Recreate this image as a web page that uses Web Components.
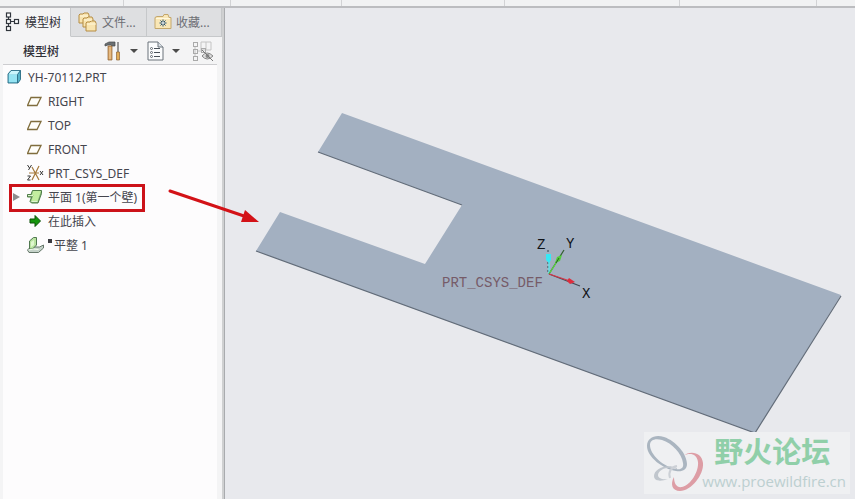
<!DOCTYPE html>
<html lang="zh-CN">
<head>
<meta charset="utf-8">
<title>YH-70112.PRT</title>
<style>
  html, body {
    margin: 0;
    height: 100%;
  }
  body {
    font-family: "Noto Sans", "Noto Sans CJK SC", sans-serif;
    font-size: 12px;
    color: #45454d;
    background: #e8e9ed;
    overflow: hidden;
  }
</style>
</head>
<body>
<cad-app>
  <tree-panel slot="panel" heading="模型树">
    <panel-tab slot="tabs" icon="tree" label="模型树" selected></panel-tab>
    <panel-tab slot="tabs" icon="folders" label="文件..."></panel-tab>
    <panel-tab slot="tabs" icon="favorite" label="收藏..."></panel-tab>
    <tree-item icon="part" root>YH-70112.PRT</tree-item>
    <tree-item icon="datum">RIGHT</tree-item>
    <tree-item icon="datum">TOP</tree-item>
    <tree-item icon="datum">FRONT</tree-item>
    <tree-item icon="csys">PRT_CSYS_DEF</tree-item>
    <tree-item icon="wall" expandable marked>平面 1(第一个壁)</tree-item>
    <tree-item icon="insert">在此插入</tree-item>
    <tree-item icon="flat" pending>平整 1</tree-item>
  </tree-panel>
  <model-view slot="view">
    <forum-mark>野火论坛</forum-mark>
  </model-view>
  <callout-arrow slot="overlay"></callout-arrow>
</cad-app>

<script>
(function () {
  const ICONS = {
    tree: [16, 20, `<g fill="#fff" stroke="#30353c" stroke-width="1.2"><path d="M3.500 5v10M5 9.500h5" fill="none"/><rect x="1.500" y="1" width="4" height="4"/><rect x="1.500" y="7.500" width="4" height="4"/><rect x="1.500" y="14.500" width="4" height="4"/><rect x="9.500" y="7.500" width="4" height="4"/></g>`],
    folders: [20, 20, `<g fill="#f8e4b0" stroke="#b58c43"><path d="M1 11V3l1-1h3l1-1h4l1 2v8z"/><path d="M5 15V7l1-1h3l1-1h4l1 2v8z"/><path d="M8 19v-8l1-1h3l1-1h4l1 2v8z"/></g><path d="M9 12h9M6 8h8M2 4h8" stroke="#fff7da"/>`],
    favorite: [18, 16, `<path d="M1 14.500V3.500l2-1h6l1-2h4l1 3h2v11z" fill="#f9e7b7" stroke="#c4a76c"/><path d="M2 4.500h14" stroke="#fff8df"/><path d="M9 5.500v7M5.500 9h7M6.500 6.500l5 5M11.500 6.500l-5 5" stroke="#234f75"/><circle cx="9" cy="9" r="1" fill="#fff"/>`],
    tools: [18, 20, `<path d="M1 5V3l4-2h6v4H8L7 4H4z" fill="#6b7073" stroke="#45494b" stroke-width=".7"/><path d="M4 5h4v14H4z" fill="#d9a568" stroke="#8d6135" stroke-width=".7"/><path d="M6 6v12" stroke="#f2cf9c"/><path d="M14 1v10" stroke="#777" stroke-width="1.500"/><path d="M12.500 11h3v8h-3z" fill="#e2ad57" stroke="#8d6135" stroke-width=".7"/>`],
    list: [17, 20, `<path d="M1 1h10l5 5v13H1z" fill="#fbfcfd" stroke="#6b737b"/><path d="M11 1v5h5" fill="#dce2e8" stroke="#6b737b"/><path d="M7 7.500h6M7 11.500h6M7 15.500h6" stroke="#4a5159"/><g fill="#fff" stroke="#4a5159" stroke-width=".8"><circle cx="4.500" cy="7.500" r="1"/><circle cx="4.500" cy="11.500" r="1"/><circle cx="4.500" cy="15.500" r="1"/></g>`],
    hidden: [22, 20, `<g fill="none" stroke="#aaa"><path d="M3 5v10M5 10h4M9 1v8h10V1zM14 1v8" stroke="#c4c4c4"/><rect x="1.500" y="1.500" width="4" height="4"/><rect x="1.500" y="8.500" width="4" height="4"/><rect x="1.500" y="15.500" width="4" height="4"/><rect x="9.500" y="7.500" width="4" height="4"/></g><path d="M10 15q5-6 11 0-6 6-11 0z" fill="#ddd" stroke="#868686"/><circle cx="15.500" cy="15" r="2" fill="#888"/><path d="M10 9l11 11" stroke="#777"/>`],
    part: [16, 16, `<path d="M1 5l3-3.500h9.500v9L11 14H1z" fill="#54b3ca"/><path d="M1.500 5.500h9V13l-1 .5h-8z" fill="#96e4f3"/><path d="M1.500 5.500l3-4H13l-2.500 4z" fill="#c9f5fc"/><path d="M1 5l3-3.500h9.500v9L11 14H1zM10.500 5.500l3-4M10.500 5.500V14" fill="none" stroke="#286b83" stroke-width=".9"/>`],
    datum: [16, 16, `<path d="M4 4.500h10l-4 8H.500z" fill="#fffefa" stroke="#806d3d" stroke-width="1.300"/>`],
    csys: [17, 18, `<path d="M2 9h10M5 3l7 13M12 2L5 16" fill="none" stroke="#a5793c" stroke-width="1.200"/><path d="M0.500 1l2 3M4.500 1l-3 5M0.500 12h3l-3 4h3M13 7l3 4M16 7l-3 4" fill="none" stroke="#383838"/>`],
    wall: [16, 16, `<path d="M5.500 1.500h9v3l-3.500 9.500H4.500L3 12.500l1.500-4.500H.500V5.500h3.500z" fill="#7fb070" stroke="#4f7d49"/><path d="M6 2h8l-3.500 10.500H4L6.500 6H5z" fill="#c3ee9f"/><path d="M1 6.500h5M4.500 12.500h6" stroke="#e0f5d2"/>`],
    insert: [16, 16, `<path d="M3 6h5V2.500L13.500 8 8 13.500V10H3z" fill="#16950d" stroke="#0d5109"/>`],
    flat: [17, 18, `<path d="M.5 14l3-3h9l4-2v3l-5 4.500H2z" fill="#c5d2c9" stroke="#65776a"/><path d="M2.500 5l4-3.500h3V9l-4 4h-3z" fill="#b9e3a0" stroke="#517850"/><path d="M1.500 14l5-1 5 .5" fill="none" stroke="#f6fff0"/><path d="M4 6l3-2v5l-3 2z" fill="#dff7ce"/>`]
  };

  function icon(name) {
    const [w, h, body] = ICONS[name];
    return `<svg width="${w}" height="${h}" viewBox="0 0 ${w} ${h}" aria-hidden="true">${body}</svg>`;
  }

  function define(name, render) {
    customElements.define(name, class extends HTMLElement {
      connectedCallback() {
        if (this.shadowRoot) return;
        const template = document.createElement("template");
        template.innerHTML = render(this);
        this.attachShadow({ mode: "open" }).appendChild(template.content.cloneNode(true));
      }
    });
  }

  define("cad-app", () => `
    <style>
      :host {
        display: flex;
        flex-direction: column;
        position: relative;
        height: 100vh;
      }
      .ribbon {
        display: grid;
        grid-template-columns: 123fr 107fr 111fr 163fr 175fr 137fr 39fr;
        height: 6px;
        background: #f1f2f3;
        border-bottom: 2px solid #bcbdc0;
      }
      .ribbon i + i {
        border-left: 1px solid #d2d3d5;
      }
      .main {
        flex: 1;
        display: flex;
        min-height: 0;
      }
    </style>
    <div class="ribbon"><i></i><i></i><i></i><i></i><i></i><i></i><i></i></div>
    <div class="main">
      <slot name="panel"></slot>
      <slot name="view"></slot>
    </div>
    <slot name="overlay"></slot>
  `);

  define("tree-panel", (el) => `
    <style>
      :host {
        display: flex;
        flex-direction: column;
        flex: none;
        width: 222px;
        background: #f4f4f5;
        border-right: 2px solid #cfd0d1;
        box-shadow: 1px 0 #a9abae;
        margin-right: 1px;
      }
      .tabs {
        display: grid;
        grid-template-columns: 71px 76px 1fr;
        height: 29px;
      }
      header {
        display: flex;
        align-items: center;
        height: 27px;
        margin: 0 5px 0 3px;
        padding-left: 20px;
        border-bottom: 1px solid #cdcdd0;
      }
      h2 {
        flex: 1;
        margin: 0;
        font-size: 12px;
        font-weight: 500;
        color: #303038;
      }
      button {
        display: flex;
        align-items: center;
        gap: 8px;
        margin: 0 9px 0 0;
        padding: 0;
        border: 0;
        background: none;
      }
      button:last-child {
        margin: 0 3px;
      }
      button.menu::after {
        content: "";
        border: 4px solid transparent;
        border-top-color: #4b4b4b;
        border-bottom: 0;
      }
      .list {
        flex: 1;
        margin: 0 5px 0 3px;
        padding-left: 4px;
        background: #fdfcfd;
      }
    </style>
    <div class="tabs" role="tablist"><slot name="tabs"></slot></div>
    <header>
      <h2>${el.getAttribute("heading")}</h2>
      <button class="menu" aria-label="设置">${icon("tools")}</button>
      <button class="menu" aria-label="显示">${icon("list")}</button>
      <button aria-label="隐藏">${icon("hidden")}</button>
    </header>
    <div class="list" role="tree"><slot></slot></div>
  `);

  define("panel-tab", (el) => `
    <style>
      :host {
        display: block;
      }
      button {
        display: flex;
        align-items: center;
        gap: 4px;
        width: 100%;
        height: 100%;
        padding: 0 0 0 7px;
        border: 0;
        border-right: 1px solid #c6c8ca;
        border-bottom: 1px solid #c6c8ca;
        background: #dedfe1;
        color: #6d6e74;
        font: inherit;
        white-space: nowrap;
      }
      :host([selected]) button {
        padding-left: 5px;
        border-bottom-color: transparent;
        background: #f4f4f5;
        color: #303038;
      }
    </style>
    <button role="tab" aria-selected="${el.hasAttribute("selected")}">${icon(el.getAttribute("icon"))}${el.getAttribute("label")}</button>
  `);

  define("tree-item", (el) => `
    <style>
      :host {
        display: block;
      }
      .row {
        display: inline-flex;
        align-items: center;
        position: relative;
        height: 24px;
        vertical-align: top;
        white-space: nowrap;
      }
      .twist {
        width: 20px;
        height: 8px;
      }
      :host([root]) .twist {
        display: none;
      }
      .twist::before {
        content: "";
        display: none;
        width: 0;
        margin-left: 6px;
        border: 4px solid transparent;
        border-left: 7px solid #8d8d8d;
        border-right: 0;
      }
      :host([expandable]) .twist::before {
        display: block;
      }
      .icon {
        display: flex;
        width: 21px;
      }
      svg {
        flex: none;
      }
      :host([pending]) .label::before {
        content: "";
        display: inline-block;
        width: 4px;
        height: 4px;
        margin-right: 2px;
        vertical-align: 7px;
        background: #3d3d42;
      }
      /* red frame drawn over the neighbouring rows */
      :host([marked]) .row::after {
        content: "";
        position: absolute;
        inset: -1px -8px -3px 2px;
        border: 3px solid #cc1219;
      }
    </style>
    <div class="row" role="treeitem">
      <span class="twist"></span>
      <span class="icon">${icon(el.getAttribute("icon"))}</span>
      <span class="label"><slot></slot></span>
    </div>
  `);

  define("model-view", () => `
    <style>
      :host {
        display: block;
        position: relative;
        flex: 1;
        min-width: 0;
        background: #e8e9ed;
      }
      svg {
        display: block;
        width: 100%;
        height: 100%;
      }
      text {
        font-family: "Liberation Mono", monospace;
        font-size: 14px;
        fill: #765b68;
      }
      .axis {
        fill: #101318;
      }
      ::slotted(forum-mark) {
        position: absolute;
        right: 5px;
        bottom: 5px;
      }
    </style>
    <svg viewBox="225 8 630 491" preserveAspectRatio="xMinYMin meet" role="img" aria-label="PRT_CSYS_DEF">
      <path d="M342 113L841 295L755 433L256 251L280 212L425 264L462 205L318 152z" fill="#a3b0c1"/>
      <path d="M318 152L462 205M256 251L755 433L841 296" fill="none" stroke="#626c79" stroke-width="1.200"/>
      <g fill="none" stroke-width="1.200">
        <path d="M548 250V274" stroke="#48555d" stroke-dasharray="2 2"/>
        <path d="M549 256V274" stroke="#55eef2"/>
        <path d="M549 274L564 250" stroke="#335c2f"/>
        <path d="M549 274L558 260" stroke="#5bde40"/>
        <path d="M549 274L580 286" stroke="#454953"/>
        <path d="M549 274L570 281" stroke="#d93546"/>
      </g>
      <path d="M546 254h5v6l-2 3-3-3z" fill="#38e8f5"/>
      <path d="M555 263l2-6 5-2-2 6z" fill="#51ce38"/>
      <path d="M556 263l3-5" stroke="#34572d"/>
      <path d="M567 281l2-3 6 4-5 2z" fill="#de2c3c"/>
      <text x="442" y="287">PRT_CSYS_DEF</text>
      <text class="axis" x="537" y="249">Z</text>
      <text class="axis" x="566" y="248">Y</text>
      <text class="axis" x="582" y="298">X</text>
    </svg>
    <slot></slot>
  `);

  define("forum-mark", () => `
    <style>
      :host {
        display: flex;
        box-sizing: border-box;
        height: 62px;
        padding-right: 4px;
        background: #eff0f2;
      }
      .text {
        display: flex;
        flex-direction: column;
        margin-left: -2px;
      }
      strong {
        padding-left: 12px;
        font-size: 29px;
        line-height: 40px;
        color: #90cfa9;
      }
      a {
        font-family: "Open Sans", sans-serif;
        font-size: 15px;
        line-height: 18px;
        color: #bccfd0;
        text-decoration: none;
      }
    </style>
    <svg width="60" height="62" viewBox="0 0 60 62" aria-hidden="true">
      <path fill-rule="evenodd" fill="#aab5c0" d="M3 14C3 6 11 2 20 5C32 9 43 22 43 32C43 38 38 40 32 39C19 37 3 25 3 14zM6 13C6 23 20 35 32 37C37 38 40 36 39 31C38 22 28 11 18 8C11 6 6 8 6 13z"/>
      <path fill="#c0c6cd" d="M33 36C22 31 10 37 10 44C10 49 16 50 24 47C18 48 14 46 14 43C15 37 24 34 33 37z"/>
      <path d="M33 34C27 35 24 40 26 46" fill="none" stroke="#ccd0d6" stroke-width="2"/>
      <path fill="#dd9da5" d="M39 24C46 18 58 20 59 31C60 43 47 59 36 59C28 59 26 52 30 45C30 52 33 56 38 55C47 53 55 39 54 30C53 22 46 20 39 24z"/>
    </svg>
    <div class="text">
      <strong><slot></slot></strong>
      <a href="#">www.proewildfire.cn</a>
    </div>
  `);

  // Spans the panel and the view, so it is laid over both.
  define("callout-arrow", () => `
    <style>
      :host {
        position: absolute;
        left: 168px;
        top: 188px;
        pointer-events: none;
      }
      svg {
        display: block;
      }
    </style>
    <svg width="92" height="38" viewBox="0 0 92 38" aria-hidden="true">
      <path d="M2 3L76 28" stroke="#d31217" stroke-width="3" stroke-linecap="round"/>
      <path d="M77 22L91 34L73 34z" fill="#d31217"/>
    </svg>
  `);
})();
</script>
</body>
</html>
